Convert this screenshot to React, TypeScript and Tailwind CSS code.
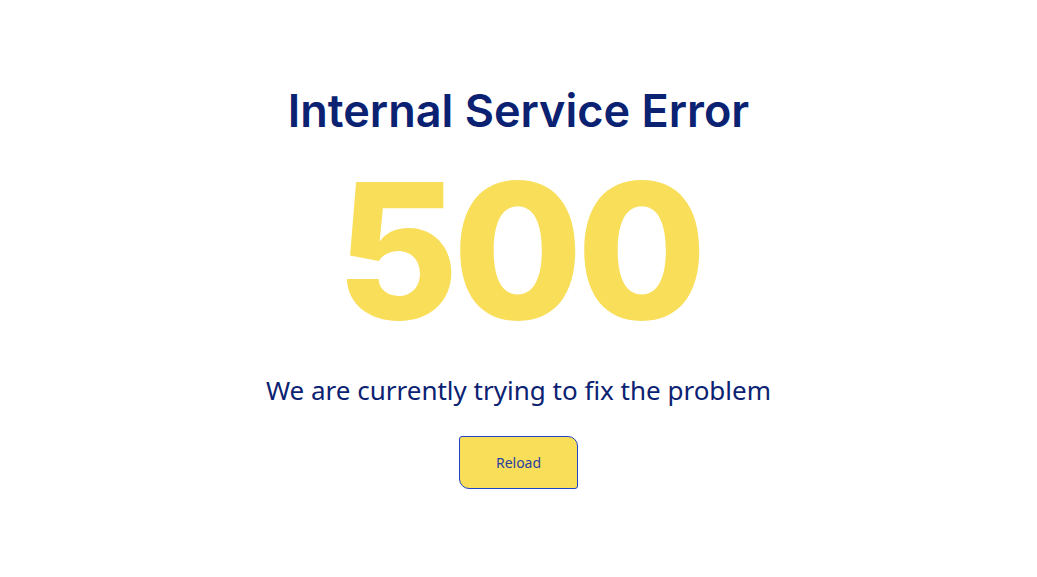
export default function App() {
  return (
    <div className="min-h-screen w-full bg-white flex flex-col items-center">
      <h1 className="mt-[83px] font-['Inter',sans-serif] text-[45px] leading-[56px] font-semibold text-[#0b2272]">
        Internal Service Error
      </h1>
      <div className="mt-[18px] font-['Inter',sans-serif] font-extrabold text-[188px] leading-[188px] text-[#f9de5a] tracking-[-6px]">
        500
      </div>
      <p className="mt-[28px] font-['Noto_Sans',sans-serif] text-[26px] leading-[34px] text-[#0b2272]">
        We are currently trying to fix the problem
      </p>
      <button className="mt-[29px] w-[119px] h-[53px] bg-[#f9de5a] border border-[#1f44c4] rounded-tl-[3px] rounded-br-[3px] rounded-tr-[10px] rounded-bl-[10px] font-['Noto_Sans',sans-serif] text-[14px] text-[#2a3fa0]">
        Reload
      </button>
    </div>
  );
}
